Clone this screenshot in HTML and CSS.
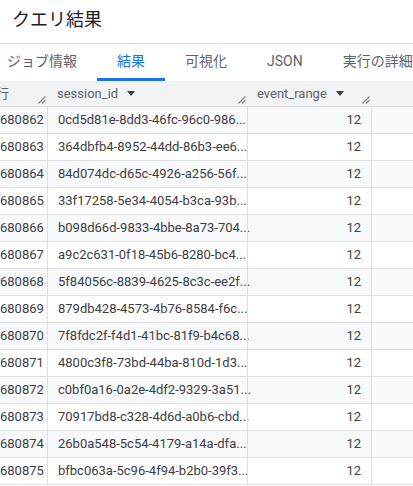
FILE: index.html
```html
<!DOCTYPE html>
<html lang="ja">
<head>
<meta charset="utf-8">
<link rel="stylesheet" href="styles.css">
</head>
<body>
<div class="page">
  <div class="title">クエリ結果</div>
  <div class="tabs">
    <div class="tab">ジョブ情報</div>
    <div class="tab active">結果</div>
    <div class="tab">可視化</div>
    <div class="tab">JSON</div>
    <div class="tab">実行の詳細</div>
  </div>
  <div class="table">
    <div class="row head">
      <div class="cell c1"><span>行</span><svg class="grip" viewBox="0 0 8 8"><path d="M0.5 7.5 L7.5 0.5 M4 7.5 L7.5 4"/></svg></div>
      <div class="cell c2"><span>session_id</span><b class="caret"></b><svg class="grip" viewBox="0 0 8 8"><path d="M0.5 7.5 L7.5 0.5 M4 7.5 L7.5 4"/></svg></div>
      <div class="cell c3"><span>event_range</span><b class="caret"></b><svg class="grip" viewBox="0 0 8 8"><path d="M0.5 7.5 L7.5 0.5 M4 7.5 L7.5 4"/></svg></div>
      <div class="cell c4"></div>
    </div>
    <div class="row odd"><div class="cell c1 num">680862</div><div class="cell c2">0cd5d81e-8dd3-46fc-96c0-986...</div><div class="cell c3 num">12</div><div class="cell c4"></div></div>
    <div class="row"><div class="cell c1 num">680863</div><div class="cell c2">364dbfb4-8952-44dd-86b3-ee6...</div><div class="cell c3 num">12</div><div class="cell c4"></div></div>
    <div class="row odd"><div class="cell c1 num">680864</div><div class="cell c2">84d074dc-d65c-4926-a256-56f...</div><div class="cell c3 num">12</div><div class="cell c4"></div></div>
    <div class="row"><div class="cell c1 num">680865</div><div class="cell c2">33f17258-5e34-4054-b3ca-93b...</div><div class="cell c3 num">12</div><div class="cell c4"></div></div>
    <div class="row odd"><div class="cell c1 num">680866</div><div class="cell c2">b098d66d-9833-4bbe-8a73-704...</div><div class="cell c3 num">12</div><div class="cell c4"></div></div>
    <div class="row"><div class="cell c1 num">680867</div><div class="cell c2">a9c2c631-0f18-45b6-8280-bc4...</div><div class="cell c3 num">12</div><div class="cell c4"></div></div>
    <div class="row odd"><div class="cell c1 num">680868</div><div class="cell c2">5f84056c-8839-4625-8c3c-ee2f...</div><div class="cell c3 num">12</div><div class="cell c4"></div></div>
    <div class="row"><div class="cell c1 num">680869</div><div class="cell c2">879db428-4573-4b76-8584-f6c...</div><div class="cell c3 num">12</div><div class="cell c4"></div></div>
    <div class="row odd"><div class="cell c1 num">680870</div><div class="cell c2">7f8fdc2f-f4d1-41bc-81f9-b4c68...</div><div class="cell c3 num">12</div><div class="cell c4"></div></div>
    <div class="row"><div class="cell c1 num">680871</div><div class="cell c2">4800c3f8-73bd-44ba-810d-1d3...</div><div class="cell c3 num">12</div><div class="cell c4"></div></div>
    <div class="row odd"><div class="cell c1 num">680872</div><div class="cell c2">c0bf0a16-0a2e-4df2-9329-3a51...</div><div class="cell c3 num">12</div><div class="cell c4"></div></div>
    <div class="row"><div class="cell c1 num">680873</div><div class="cell c2">70917bd8-c328-4d6d-a0b6-cbd...</div><div class="cell c3 num">12</div><div class="cell c4"></div></div>
    <div class="row odd"><div class="cell c1 num">680874</div><div class="cell c2">26b0a548-5c54-4179-a14a-dfa...</div><div class="cell c3 num">12</div><div class="cell c4"></div></div>
    <div class="row"><div class="cell c1 num">680875</div><div class="cell c2">bfbc063a-5c96-4f94-b2b0-39f3...</div><div class="cell c3 num">12</div><div class="cell c4"></div></div>
  </div>
</div>
</body>
</html>
```

FILE: styles.css
```css
html, body {
  margin: 0;
  padding: 0;
  background: #fff;
}
body {
  font-family: Roboto, "Noto Sans CJK JP", sans-serif;
  color: #202124;
  width: 413px;
  height: 486px;
  overflow: hidden;
}
.page {
  width: 413px;
  overflow: hidden;
}
.title {
  height: 44px;
  box-sizing: border-box;
  padding: 7px 0 0 12px;
  font-size: 18px;
  line-height: 26px;
  color: #202124;
  border-bottom: 1px solid #dadce0;
}
.tabs {
  display: flex;
  height: 37px;
  margin-left: -13px;
  white-space: nowrap;
}
.tab {
  flex: none;
  padding: 0 20px;
  font-size: 14px;
  line-height: 34px;
  height: 34px;
  color: #5f6368;
  border-bottom: 3px solid transparent;
}
.tab.active {
  color: #1a73e8;
  border-bottom-color: #1a73e8;
}
.table {
  margin-left: -10px;
  width: 440px;
  font-size: 13px;
}
.row {
  display: flex;
  height: 27px;
  box-sizing: border-box;
  border-bottom: 1px solid #e0e0e0;
  background: #fff;
}
.row.odd {
  background: #f8f9fa;
}
.row.head {
  height: 26px;
  background: #f1f3f4;
  color: #5f6368;
  border-bottom: 1px solid #dadce0;
}
.cell {
  position: relative;
  flex: none;
  box-sizing: border-box;
  line-height: 26px;
  padding: 0 10px;
  white-space: nowrap;
  overflow: hidden;
  color: #3c4043;
}
.row .cell + .cell {
  border-left: 1px solid #e0e0e0;
}
.row.head .cell {
  border-left: none;
  color: #5f6368;
  line-height: 25px;
}
.c1 { width: 57px; }
.c2 { width: 200px; padding-right: 0; overflow: visible; }
.c3 { width: 124px; }
.c4 { flex: 1; }
.row.head .c1 { padding-left: 6px; }
.num {
  text-align: right;
  padding-right: 10px;
}
.caret {
  display: inline-block;
  width: 0;
  height: 0;
  margin-left: 9px;
  vertical-align: 2px;
  border-left: 4px solid transparent;
  border-right: 4px solid transparent;
  border-top: 5px solid #3c4043;
}
.grip {
  position: absolute;
  right: 1px;
  bottom: 2px;
  width: 8px;
  height: 8px;
  fill: none;
  stroke: #80868b;
  stroke-width: 1.2;
}
```
